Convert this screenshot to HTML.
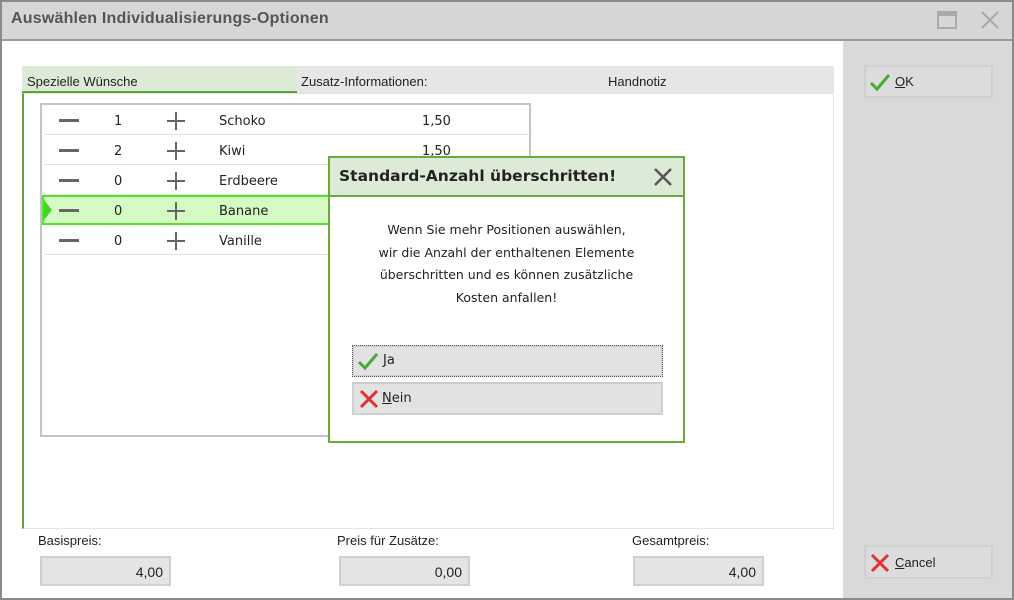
<!DOCTYPE html><html><head><meta charset="utf-8"><style>
*{box-sizing:border-box;margin:0;padding:0}
body{width:1014px;height:600px;position:relative;overflow:hidden;font-family:"DejaVu Sans","Liberation Sans",sans-serif;font-size:13px;color:#222;background:#fff}
.a{position:absolute}
.row{position:absolute;left:2px;width:486px;height:30px;border-bottom:1px solid #e2e2e2}
.row span{position:absolute;top:9px}
.min{position:absolute;left:15px;top:14px;width:20px;height:3px;background:#666}
.plus{position:absolute;left:123px;top:7px;width:18px;height:18px}
.plus:before{content:"";position:absolute;left:8px;top:0;width:2px;height:18px;background:#666}
.plus:after{content:"";position:absolute;left:0;top:8px;width:18px;height:2px;background:#666}
.fld{position:absolute;height:30px;width:131px;background:#e4e4e4;border:2px solid #cfcfcf;text-align:right;padding:6px 6px 0 0;font-family:"Liberation Sans",sans-serif;font-size:14px}
.lbl{position:absolute;top:533px;font-family:"Liberation Sans",sans-serif;font-size:13px}
.btn{position:absolute;background:#e2e2e2;border:2px solid #d0d0d0}
svg{position:absolute}
</style></head><body>
<div class="a" style="left:0;top:0;width:1014px;height:600px;border:2px solid #8a8a8a;z-index:9;pointer-events:none"></div>
<div class="a" style="left:0;top:0;width:1014px;height:41px;background:#d6d6d6;border-bottom:2px solid #9a9a9a"></div>
<div class="a" style="left:11px;top:10px;font-size:16px;color:#555;font-family:'Liberation Sans',sans-serif;font-weight:bold;letter-spacing:0.2px">Auswählen Individualisierungs-Optionen</div>
<div class="a" style="left:937px;top:11px;width:20px;height:18px;border:2px solid #aaa;border-top-width:5px"></div>
<svg style="left:980px;top:10px" width="20" height="20"><path d="M2 2L18 18M18 2L2 18" stroke="#aaa" stroke-width="2"/></svg>
<div class="a" style="left:843px;top:41px;width:171px;height:559px;background:#d9d9d9"></div>
<div class="a" style="left:22px;top:66px;width:812px;height:27px;background:#e6e6e6"></div>
<div class="a" style="left:22px;top:66px;width:275px;height:27px;background:#dcebd7;border-bottom:2px solid #5fa63a"></div>
<div class="a" style="left:27px;top:74px;font-size:13px;font-family:'Liberation Sans',sans-serif">Spezielle Wünsche</div>
<div class="a" style="left:301px;top:74px;font-size:13px;font-family:'Liberation Sans',sans-serif">Zusatz-Informationen:</div>
<div class="a" style="left:608px;top:74px;font-size:13px;font-family:'Liberation Sans',sans-serif">Handnotiz</div>
<div class="a" style="left:22px;top:93px;width:812px;height:436px;border:1px solid #d9ecd2;border-left:2px solid #5fa63a"></div>
<div class="a" style="left:40px;top:103px;width:491px;height:334px;border:2px solid #c4c4c4;background:#fff">
<div class="row" style="top:0"><i class="min"></i><span style="left:70px">1</span><i class="plus"></i><span style="left:175px">Schoko</span><span style="left:378px">1,50</span></div>
<div class="row" style="top:30px"><i class="min"></i><span style="left:70px">2</span><i class="plus"></i><span style="left:175px">Kiwi</span><span style="left:378px">1,50</span></div>
<div class="row" style="top:60px"><i class="min"></i><span style="left:70px">0</span><i class="plus"></i><span style="left:175px">Erdbeere</span></div>
<div class="row" style="top:90px;background:#d5fbc4;border:2px solid #55e02a;left:0;width:488px"><div class="a" style="left:0;top:3px;width:0;height:0;border-top:10px solid transparent;border-bottom:10px solid transparent;border-left:8px solid #3fd81a"></div><i class="min" style="left:15px;top:12px"></i><span style="left:70px;top:7px">0</span><i class="plus" style="left:123px;top:5px"></i><span style="left:175px;top:7px">Banane</span></div>
<div class="row" style="top:120px"><i class="min"></i><span style="left:70px">0</span><i class="plus"></i><span style="left:175px">Vanille</span></div>
</div>
<div class="a" style="left:328px;top:156px;width:357px;height:287px;border:2px solid #6aaa3a;background:#fff">
<div class="a" style="left:0;top:0;width:353px;height:39px;background:#dcebd7;border-bottom:2px solid #6aaa3a"></div>
<div class="a" style="left:9px;top:9px;font-size:15.5px;font-weight:bold">Standard-Anzahl überschritten!</div>
<svg style="left:323px;top:9px" width="20" height="20"><path d="M2 2L18 18M18 2L2 18" stroke="#555" stroke-width="2.5"/></svg>
<div class="a" style="left:0;top:61px;width:353px;text-align:center;font-size:12.5px;line-height:22.5px">Wenn Sie mehr Positionen auswählen,<br>wir die Anzahl der enthaltenen Elemente<br>überschritten und es können zusätzliche<br>Kosten anfallen!</div>
<div class="btn" style="left:22px;top:187px;width:311px;height:32px;border:1px dotted #555;box-shadow:inset 0 0 0 1px #d0d0d0"><svg style="left:4px;top:5px" width="22" height="20"><path d="M2 11L8 17L20 3" stroke="#4aa83a" stroke-width="3" fill="none"/></svg><span class="a" style="left:30px;top:7px"><u>J</u>a</span></div>
<div class="btn" style="left:22px;top:224px;width:311px;height:33px"><svg style="left:5px;top:5px" width="20" height="20"><path d="M2 2L18 18M18 2L2 18" stroke="#e03030" stroke-width="3"/></svg><span class="a" style="left:28px;top:7px"><u>N</u>ein</span></div>
</div>
<div class="lbl" style="left:38px">Basispreis:</div>
<div class="lbl" style="left:337px">Preis für Zusätze:</div>
<div class="lbl" style="left:632px">Gesamtpreis:</div>
<div class="fld" style="left:40px;top:556px">4,00</div>
<div class="fld" style="left:339px;top:556px">0,00</div>
<div class="fld" style="left:633px;top:556px">4,00</div>
<div class="btn" style="left:864px;top:65px;width:129px;height:33px;background:#dcdcdc"><svg style="left:3px;top:5px" width="22" height="20"><path d="M2 11L8 17L20 3" stroke="#4aa83a" stroke-width="3" fill="none"/></svg><span class="a" style="left:29px;top:7px;font-family:'Liberation Sans',sans-serif"><u>O</u>K</span></div>
<div class="btn" style="left:864px;top:545px;width:129px;height:34px;background:#dcdcdc"><svg style="left:4px;top:6px" width="20" height="20"><path d="M2 2L18 18M18 2L2 18" stroke="#e03030" stroke-width="3"/></svg><span class="a" style="left:29px;top:8px;font-family:'Liberation Sans',sans-serif"><u>C</u>ancel</span></div>
</body></html>
